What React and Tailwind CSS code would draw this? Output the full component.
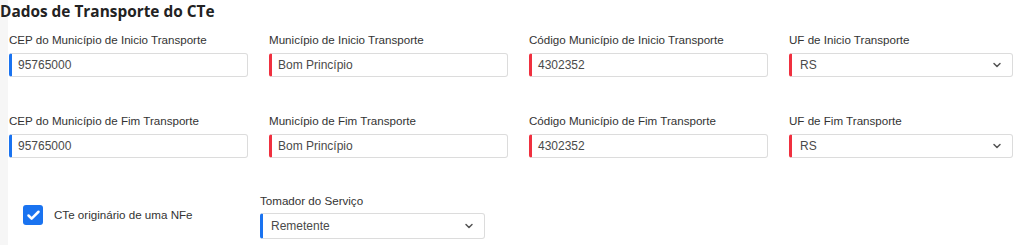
import { ChevronDown, Check } from "lucide-react";

const rows = [
  [
    { label: "CEP do Município de Inicio Transporte", value: "95765000", accent: "blue" },
    { label: "Município de Inicio Transporte", value: "Bom Princípio", accent: "red" },
    { label: "Código Município de Inicio Transporte", value: "4302352", accent: "red" },
    { label: "UF de Inicio Transporte", value: "RS", accent: "red", select: true },
  ],
  [
    { label: "CEP do Município de Fim Transporte", value: "95765000", accent: "blue" },
    { label: "Município de Fim Transporte", value: "Bom Princípio", accent: "red" },
    { label: "Código Município de Fim Transporte", value: "4302352", accent: "red" },
    { label: "UF de Fim Transporte", value: "RS", accent: "red", select: true },
  ],
];

function Field({ label, value, accent, select }) {
  const border = accent === "blue" ? "border-l-[#1a73f0]" : "border-l-[#f0303f]";
  return (
    <div className="flex flex-col">
      <span className="text-[11.6px] leading-[14px] text-[#333] h-[14px] mt-[1px] mb-[6px]">{label}</span>
      <div
        className={`flex items-center h-[24px] border border-[#dcdcdc] border-l-[3px] ${border} rounded-[3px] bg-white text-[12px] text-[#4a4a4a] ${
          select ? "pl-[8px] pr-[9px]" : "pl-[6px]"
        }`}
      >
        <span className="flex-1">{value}</span>
        {select && <ChevronDown size={12} strokeWidth={3} className="text-[#555]" />}
      </div>
    </div>
  );
}

export default function App() {
  return (
    <div
      className="w-[1024px] h-[245px] bg-white flex overflow-hidden"
      style={{ fontFamily: "'Liberation Sans', Arial, sans-serif" }}
    >
      <div className="w-[8px] shrink-0 bg-[#f6f6f6]" />
      <div className="flex flex-col flex-1 relative">
        <h1
          className="-ml-[8px] mt-[2px] text-[15.4px] leading-[20px] font-bold text-[#222]"
          style={{ fontFamily: "'Open Sans', sans-serif" }}
        >
          Dados de Transporte do CTe
        </h1>
        <div className="pl-[1px] mt-[10px] flex flex-col gap-[36px]">
          {rows.map((row, i) => (
            <div key={i} className="grid grid-cols-[239px_239px_239px_224px] gap-x-[21px]">
              {row.map((f) => (
                <Field key={f.label} {...f} />
              ))}
            </div>
          ))}
        </div>
        <div className="flex mt-[36px] pl-[15px]">
          <div className="flex items-center gap-[11px] w-[237px] mt-[11px] self-start">
            <div className="w-[20px] h-[20px] rounded-[3px] bg-[#1a73f0] flex items-center justify-center">
              <Check size={15} strokeWidth={4} className="text-white" />
            </div>
            <span className="text-[11.6px] text-[#333]">CTe originário de uma NFe</span>
          </div>
          <div className="flex flex-col w-[225px]">
            <span className="text-[11.6px] leading-[14px] text-[#333] mb-[5px]">Tomador do Serviço</span>
            <div className="flex items-center h-[26px] border border-[#dcdcdc] border-l-[3px] border-l-[#1a73f0] rounded-[3px] bg-white text-[12px] text-[#4a4a4a] pl-[8px] pr-[9px]">
              <span className="flex-1">Remetente</span>
              <ChevronDown size={12} strokeWidth={3} className="text-[#555]" />
            </div>
          </div>
        </div>
      </div>
    </div>
  );
}
